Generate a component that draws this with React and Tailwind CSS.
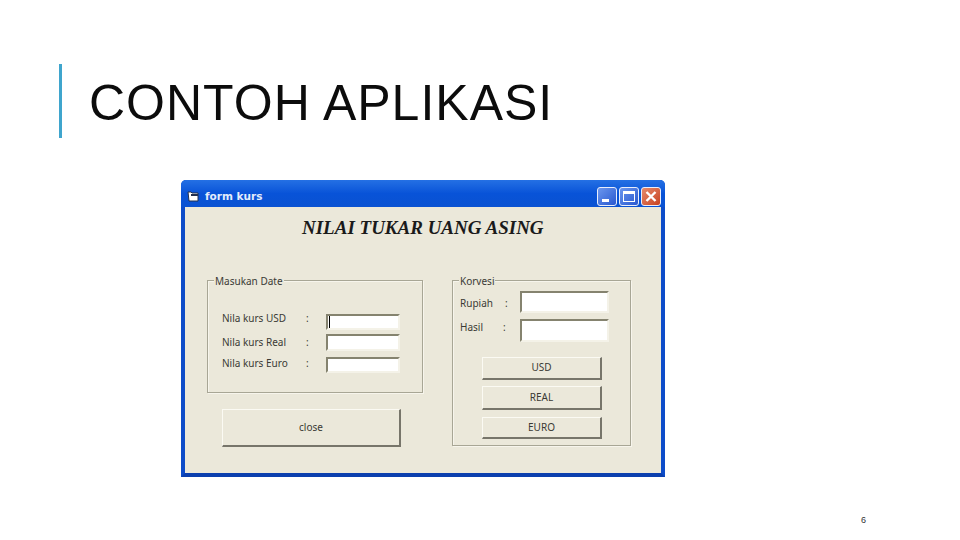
import React from "react";

const ui = "font-['Noto_Sans',sans-serif] text-[10px] leading-none text-[#3a3a35]";

function Field({ w, h, caret }) {
  return (
    <div
      className="flex items-center pl-[1px] bg-white border-2 border-t-[#85836f] border-l-[#85836f] border-r-[#f4f2e8] border-b-[#f4f2e8] shrink-0"
      style={{ width: w, height: h }}
    >
      {caret && <div className="w-[1px] h-[12px] bg-black" />}
    </div>
  );
}

function Btn({ label, w, h, mt }) {
  return (
    <div
      className={`flex items-center justify-center pb-[2px] bg-[#ebe8da] border-t border-l border-t-[#fbfaf3] border-l-[#fbfaf3] border-r-2 border-b-2 border-r-[#77756a] border-b-[#77756a] ${ui}`}
      style={{ width: w, height: h, marginTop: mt }}
    >
      {label}
    </div>
  );
}

function Group({ title, w, h, children }) {
  return (
    <div
      className="relative border border-[#a8a695] shadow-[inset_1px_1px_0_#f7f5ec,1px_1px_0_#f7f5ec]"
      style={{ width: w, height: h }}
    >
      <span className={`absolute left-[6px] top-[-5px] bg-[#ebe8da] px-[1px] ${ui}`}>{title}</span>
      {children}
    </div>
  );
}

function KursRow({ label, h, mt, caret, lift }) {
  return (
    <div className="flex items-center" style={{ height: h, marginTop: mt }}>
      <span className={`w-[84px] ${ui}`} style={{ marginTop: -lift }}>{label}</span>
      <span className={`w-[20px] ${ui}`} style={{ marginTop: -lift }}>:</span>
      <Field w={74} h={h} caret={caret} />
    </div>
  );
}

function CaptionBtn({ children, close }) {
  return (
    <div
      className={`relative w-[20px] h-[19px] rounded-[3px] border border-[#e8eefc] ${
        close
          ? "bg-gradient-to-br from-[#e58a6c] to-[#c8401c]"
          : "bg-gradient-to-br from-[#6b96ee] to-[#2a57cf]"
      }`}
    >
      {children}
    </div>
  );
}

export default function App() {
  return (
    <div className="w-[960px] h-[540px] bg-white overflow-hidden flex flex-col">
      <div className="flex h-[74px] mt-[64px] ml-[59px] shrink-0">
        <div className="w-[3px] h-full bg-[#3fa5cd]" />
        <h1 className="ml-[27px] font-['Liberation_Sans',sans-serif] font-normal text-[50px] leading-[78px] tracking-[1px] text-[#0c0c0c] whitespace-nowrap">
          CONTOH APLIKASI
        </h1>
      </div>

      <div className="ml-[181px] mt-[42px] w-[484px] h-[297px] shrink-0 flex flex-col rounded-t-[5px] bg-[#0a4fd6] border-b-[4px] border-b-[#0b3fae] border-x-[4px] border-x-[#0d4cc9]">
        <div className="h-[27px] shrink-0 flex items-center -mx-[4px] pl-[5px] pr-[5px] pt-[5px] rounded-t-[5px] bg-gradient-to-b from-[#2470e4] via-[#0853d8] to-[#0a52d2]">
          <svg width="13" height="12" viewBox="0 0 13 12" className="ml-[1px] shrink-0">
            <path d="M1 2h3l1 1h6v8H2z" fill="#fff" stroke="#22304f" strokeWidth="1" />
            <rect x="4" y="4" width="7" height="2" fill="#22304f" />
          </svg>
          <span className="ml-[5px] font-['DejaVu_Sans',sans-serif] font-bold text-[10.5px] leading-none text-[#e4ecfb]">form kurs</span>
          <div className="ml-auto flex gap-[2px] mr-[-1px]">
            <CaptionBtn>
              <div className="absolute left-[4px] bottom-[3px] w-[7px] h-[3px] bg-white" />
            </CaptionBtn>
            <CaptionBtn>
              <div className="absolute left-[3px] top-[3px] w-[12px] h-[11px] border border-t-[3px] border-white" />
            </CaptionBtn>
            <CaptionBtn close>
              <svg viewBox="0 0 18 17" className="absolute inset-0 w-full h-full">
                <path d="M4.5 4L13.5 13M13.5 4L4.5 13" stroke="#fff" strokeWidth="2.4" />
              </svg>
            </CaptionBtn>
          </div>
        </div>

        <div className="flex-1 bg-[#ebe8da] flex flex-col">
          <div className="mt-[12px] h-[17px] pl-[117px] font-['Liberation_Serif',serif] font-bold italic text-[19px] leading-[17px] text-[#1a1a1a] whitespace-nowrap">
            NILAI TUKAR UANG ASING
          </div>

          <div className="flex mt-[44px] ml-[22px]">
            <div className="flex flex-col w-[216px]">
              <Group title="Masukan Date" w={216} h={113}>
                <div className="flex flex-col pl-[14px] pt-[33px]">
                  <KursRow label="Nila kurs USD" h={16} mt={0} lift={8} caret />
                  <KursRow label="Nila kurs Real" h={17} mt={4} lift={2} />
                  <KursRow label="Nila kurs Euro" h={16} mt={6} lift={4} />
                </div>
              </Group>
              <div className="ml-[15px]">
                <Btn label="close" w={179} h={38} mt={16} />
              </div>
            </div>

            <div className="ml-[29px]">
              <Group title="Korvesi" w={179} h={166}>
                <div className="flex flex-col pl-[7px] pt-[10px]">
                  <div className="flex items-center h-[22px]">
                    <span className={`w-[45px] mt-[2px] ${ui}`}>Rupiah</span>
                    <span className={`w-[15px] mt-[2px] ${ui}`}>:</span>
                    <Field w={89} h={22} />
                  </div>
                  <div className="flex items-center h-[23px] mt-[6px]">
                    <span className={`w-[43px] -mt-[8px] ${ui}`}>Hasil</span>
                    <span className={`w-[17px] -mt-[8px] ${ui}`}>:</span>
                    <Field w={89} h={23} />
                  </div>
                  <div className="flex flex-col ml-[22px]">
                    <Btn label="USD" w={120} h={23} mt={15} />
                    <Btn label="REAL" w={120} h={24} mt={6} />
                    <Btn label="EURO" w={120} h={22} mt={7} />
                  </div>
                </div>
              </Group>
            </div>
          </div>
        </div>
      </div>

      <div className="mt-[39px] ml-[861px] font-['Liberation_Sans',sans-serif] text-[9px] leading-none text-[#333]">6</div>
    </div>
  );
}
